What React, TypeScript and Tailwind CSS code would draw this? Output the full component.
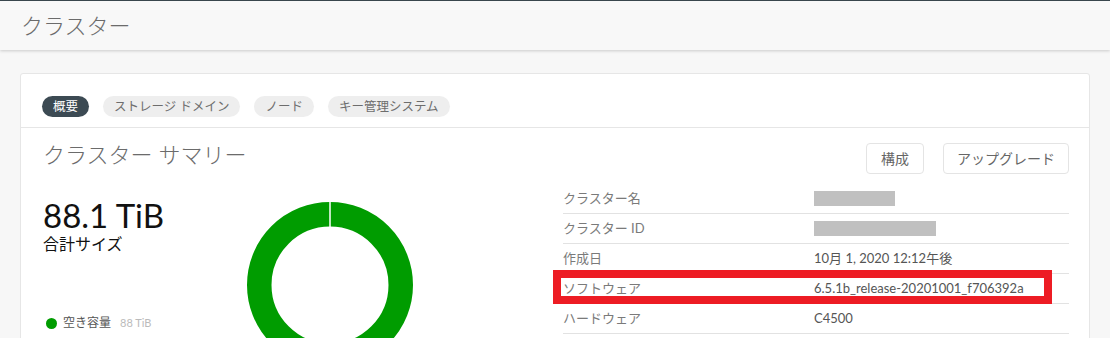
import React from "react";

const tabs = ["概要", "ストレージ ドメイン", "ノード", "キー管理システム"];

const rows: { label: string; value?: string; blank?: number; mark?: boolean }[] = [
  { label: "クラスター名", blank: 81 },
  { label: "クラスター ID", blank: 122 },
  { label: "作成日", value: "10月 1, 2020 12:12午後" },
  { label: "ソフトウェア", value: "6.5.1b_release-20201001_f706392a", mark: true },
  { label: "ハードウェア", value: "C4500" },
];

function Donut() {
  // 空き容量 100% のドーナツ
  return (
    <svg width="166" height="166" viewBox="0 0 166 166">
      <circle cx="83" cy="83" r="70.75" fill="none" stroke="#009c00" strokeWidth="24.5" />
      <line x1="83" y1="0" x2="83" y2="26" stroke="#ffffff" strokeWidth="1.5" />
    </svg>
  );
}

export default function App() {
  return (
    <div
      className="min-h-screen bg-[#f7f7f7] border-t border-[#3b4850]"
      style={{ fontFamily: 'Lato, "Noto Sans CJK JP", sans-serif' }}
    >
      <header className="h-[49px] bg-[#f8f8f8] shadow-[0_1px_3px_rgba(0,0,0,0.18)] flex items-center px-[21px]">
        <h1 className="text-[22px] text-[#6b6b6b] font-light">クラスター</h1>
      </header>

      <div className="px-5 pt-[23px]">
        <div className="bg-white border border-[#e6e6e6] rounded-[3px] min-h-[300px]">
          <div className="flex gap-[14px] pl-[21px] pt-[22px] pb-[10px]">
            {tabs.map((t, i) => (
              <span
                key={t}
                className={
                  i === 0
                    ? "h-[21px] px-[11px] rounded-full bg-[#3c4a53] text-white text-[12.5px] leading-[21px]"
                    : "h-[21px] px-[11px] rounded-full bg-[#eeeeee] text-[#6d6d6d] text-[12.5px] leading-[21px]"
                }
              >
                {t}
              </span>
            ))}
          </div>

          <div className="border-t border-[#e6e6e6] px-[22px] pt-[15px]">
            <div className="flex justify-between items-start">
              <h2 className="text-[22px] leading-[24px] text-[#6b6b6b] font-light">クラスター サマリー</h2>
              <div className="flex gap-[19px] mr-[-2px]">
                <button className="h-[31px] px-[14px] border border-[#e4e4e4] rounded-[4px] text-[14px] text-[#666]">
                  構成
                </button>
                <button className="h-[31px] px-[13px] border border-[#e4e4e4] rounded-[4px] text-[14px] text-[#666]">
                  アップグレード
                </button>
              </div>
            </div>

            <div className="flex justify-between mt-[10px]">
              <div className="flex">
                <div className="w-[204px] pt-[15px] flex flex-col">
                  <div className="text-[33px] leading-none text-[#111]">88.1 TiB</div>
                  <div className="text-[16px] leading-[20px] mt-[2px] text-[#111]">合計サイズ</div>
                  <div className="flex items-center mt-[61px] h-4 pl-[3px]">
                    <span className="w-[11px] h-[11px] rounded-full bg-[#009c00]" />
                    <span className="ml-[6px] text-[12px] text-[#555]">空き容量</span>
                    <span className="ml-[9px] text-[11px] text-[#bbb]">88 TiB</span>
                  </div>
                </div>
                <div className="mt-[18px]">
                  <Donut />
                </div>
              </div>

              <div className="w-[506px] mr-[-2px]">
                {rows.map((r) => (
                  <div
                    key={r.label}
                    className="relative flex items-center h-[30px] border-b border-[#e2e2e2] text-[13px]"
                  >
                    <div className="w-[251px] text-[#7a7a7a]">{r.label}</div>
                    <div className="text-[#555]">
                      {r.blank ? (
                        <div className="h-[15px] bg-[#c0c0c0]" style={{ width: r.blank }} />
                      ) : (
                        r.value
                      )}
                    </div>
                    {r.mark && (
                      <div className="absolute -left-[10px] right-[17px] -top-[4px] -bottom-[1px] border-[8px] border-[#ed1c24]" />
                    )}
                  </div>
                ))}
              </div>
            </div>
          </div>
        </div>
      </div>
    </div>
  );
}
